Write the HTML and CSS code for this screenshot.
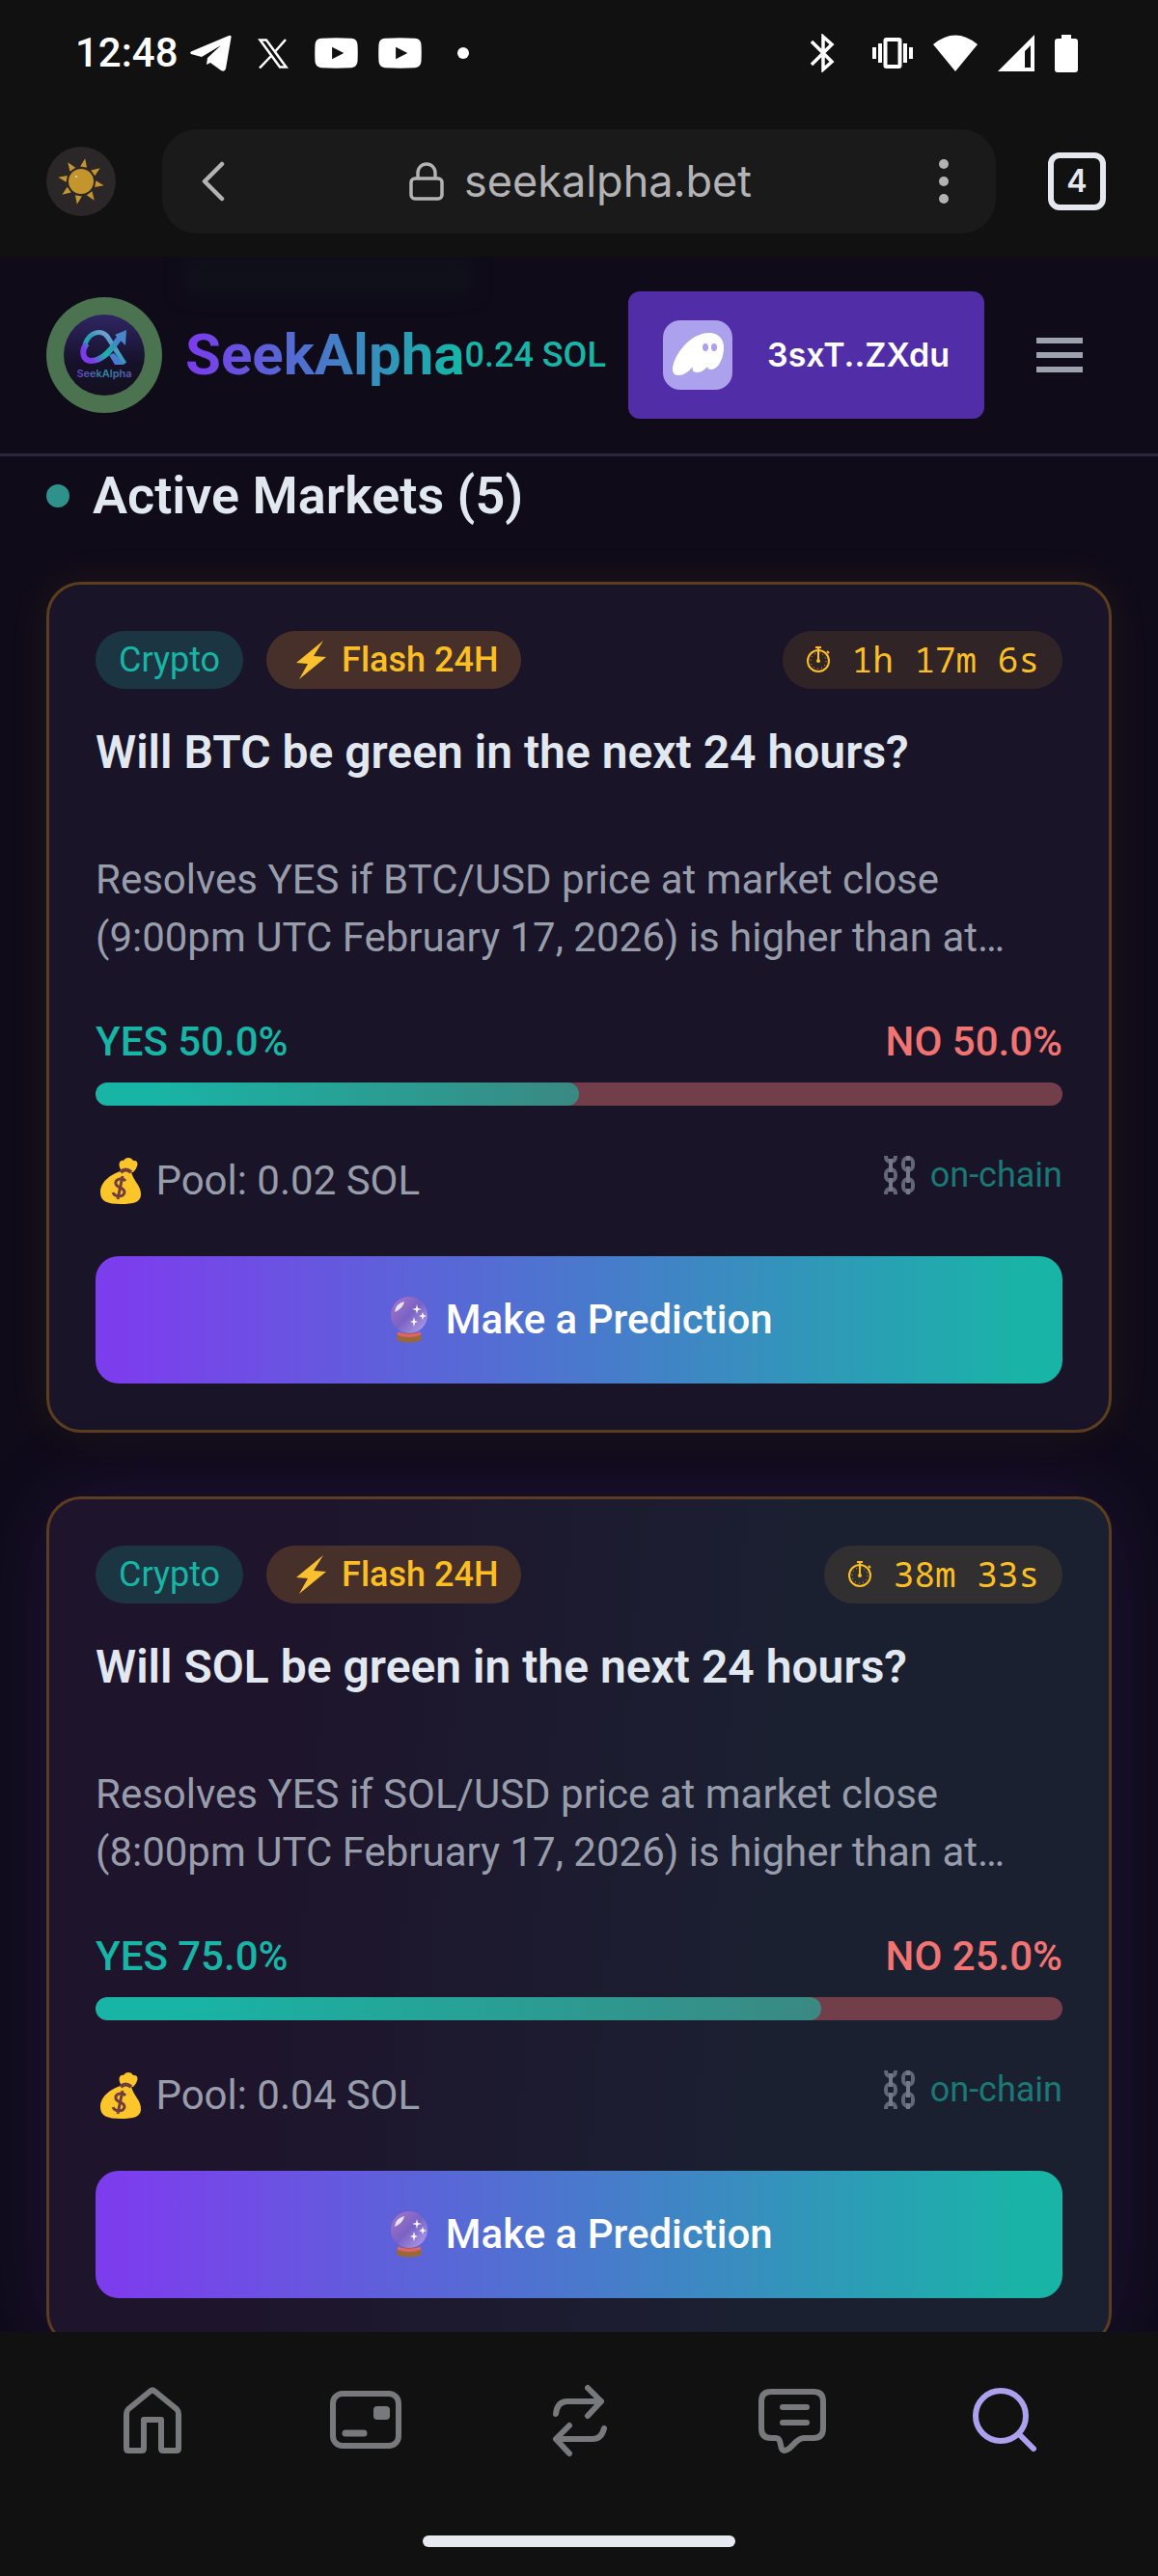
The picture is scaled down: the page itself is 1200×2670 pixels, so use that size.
FILE: index.html
```html
<!DOCTYPE html>
<html lang="en">
<head>
    <meta charset="UTF-8">
    <meta name="viewport" content="width=device-width, initial-scale=1.0">
    <title>SeekAlpha</title>
    <link rel="stylesheet" href="styles.css">
</head>
<body>
    <!-- Shared icons -->
    <svg class="sprite" aria-hidden="true">
        <defs>
            <linearGradient id="ballGlass" x1="0" y1="0" x2="1" y2="1">
                <stop offset="0" stop-color="#a878c8"/>
                <stop offset="0.5" stop-color="#7a62c4"/>
                <stop offset="1" stop-color="#b7a6ee"/>
            </linearGradient>
            <linearGradient id="alphaLoop" x1="0" y1="1" x2="1" y2="0">
                <stop offset="0" stop-color="#18b5a6"/>
                <stop offset="0.5" stop-color="#2a9db4"/>
                <stop offset="1" stop-color="#b9a3ee"/>
            </linearGradient>
            <linearGradient id="alphaArrow" x1="0" y1="0.5" x2="1" y2="0">
                <stop offset="0" stop-color="#7c3aed"/>
                <stop offset="0.4" stop-color="#18b5a6"/>
                <stop offset="1" stop-color="#4a7bd0"/>
            </linearGradient>
            <linearGradient id="logoBack" x1="0" y1="0" x2="0" y2="1">
                <stop offset="0" stop-color="#2e2663"/>
                <stop offset="0.6" stop-color="#161129"/>
                <stop offset="1" stop-color="#14101f"/>
            </linearGradient>
            <linearGradient id="logoText" x1="0" y1="0" x2="1" y2="0">
                <stop offset="0" stop-color="#6a3cc4"/>
                <stop offset="0.5" stop-color="#2a8ba4"/>
                <stop offset="1" stop-color="#5a55b0"/>
            </linearGradient>
        </defs>
        <symbol id="bolt" viewBox="0 0 45 42">
            <path d="M35 1 L7 24 L19 25 L10 41 L38 18 L25 17 Z" fill="#fbc02d"/>
        </symbol>
        <symbol id="stopwatch" viewBox="0 0 26 42">
            <g fill="none" stroke="#fbbf24">
                <circle cx="13" cy="22" r="11" stroke-width="2"/>
                <path d="M10 8h6M13 9v13M22 12l2 2" stroke-width="2"/>
                <circle cx="13" cy="22" r="8" stroke-width="1" stroke-dasharray="1 3.2"/>
            </g>
            <circle cx="13" cy="22" r="2" fill="#fbbf24"/>
        </symbol>
        <symbol id="moneybag" viewBox="0 0 52 50">
            <path d="M26 13 C23 8 25 3 29 4 C31 0 37 0 39 4 C45 3 45 10 39 16 L28 16 Z" fill="#fcc62b"/>
            <path d="M26 15 Q32 11 37 15 C38 24 48 30 47 40 C46 47 40 49 26 49 C12 49 5 46 5 37 C5 25 17 18 26 15 Z" fill="#fcc62b"/>
            <path d="M26 16 Q31 11 37 16" fill="none" stroke="#703d3f" stroke-width="4"/>
            <path d="M31 25 C28 21 20 23 21 28 C22 33 30 31 30 37 C29 42 20 42 18 37 M28 20 L23 44" fill="none" stroke="#703d3f" stroke-width="3"/>
        </symbol>
        <symbol id="chain" viewBox="0 0 45 42">
            <g fill="none" stroke="#626676" stroke-width="4">
                <path d="M8 1q0 6 5 6t5-6M8 41q0-6 5-6t5 6"/>
                <rect x="8" y="15" width="10" height="12" rx="5"/>
                <rect x="26" y="3" width="10" height="13" rx="5"/>
                <rect x="26" y="25" width="10" height="13" rx="5"/>
            </g>
            <path d="M13 4v14M13 24v14M31 1v5M31 12v17M31 35v6" stroke="#747887" stroke-width="4"/>
        </symbol>
        <symbol id="crystal" viewBox="0 0 52 50">
            <path d="M13 40 Q25 36 37 40 L38 46 Q25 51 12 46 Z" fill="#9a6835"/>
            <path d="M13 39 Q25 44 37 39" fill="none" stroke="#e0636c" stroke-width="3"/>
            <circle cx="25" cy="20" r="19" fill="url(#ballGlass)"/>
            <path d="M10 17 Q11 8 20 6 Q19 13 10 17 Z" fill="#e6e2f3"/>
            <path d="M33 9l1 4 4 1-4 1-1 4-1-4-4-1 4-1zM39 17l1 3 3 1-3 1-1 3-1-3-3-1 3-1zM30 22l1 4 3 1-3 1-1 4-1-4-3-1 3-1z" fill="#fff"/>
        </symbol>
        <symbol id="youtube" viewBox="0 0 46 32">
            <path fill="#fff" fill-rule="evenodd" d="M7 0.500Q23 -0.500 39 0.500Q45 1 45.500 7Q46 16 45.500 25Q45 31 39 31.500Q23 32.500 7 31.500Q1 31 0.500 25Q0 16 0.500 7Q1 1 7 0.500ZM18.500 9.500V22.500L31 16Z"/>
        </symbol>
    </svg>

    <!-- Status Bar -->
    <div class="status-bar">
        <div class="status-left">
            <span class="clock">12:48</span>
            <svg width="44" height="38" viewBox="0 0 44 38"><path fill="#fff" d="M41 1Q44 0 43.500 3L38 35Q37 39 33 37L22 29L18 31L19 24L33 11L13 23L2 20Q0 18 3 17Z"/></svg>
            <svg class="icon-x" width="32" height="31" viewBox="0 0 32 31"><path fill="none" stroke="#fff" stroke-width="2.500" d="M2.500 1.500H9L29.500 29.500H23ZM29 1L18 13.500M14 18L2 30.500"/></svg>
            <svg width="45" height="32"><use href="#youtube"/></svg>
            <svg width="45" height="32"><use href="#youtube"/></svg>
            <span class="status-dot"></span>
        </div>
        <div class="status-right">
            <svg width="26" height="40" viewBox="0 0 26 40"><path fill="none" stroke="#fff" stroke-width="3.500" d="M2 8L23 29L14 37V3L23 11L2 32"/></svg>
            <svg width="42" height="32" viewBox="0 0 42 32"><path fill="none" stroke="#fff" stroke-width="4" d="M2 10V22M8 6V26M34 6V26M40 10V22"/><rect x="13.500" y="2" width="15" height="28" rx="1" fill="none" stroke="#fff" stroke-width="4"/></svg>
            <svg width="46" height="38" viewBox="0 0 46 38"><path fill="#fff" d="M0 10Q23 -9 46 10L23 38Z"/></svg>
            <svg width="38" height="38" viewBox="0 0 38 38"><path fill="#fff" fill-rule="evenodd" d="M38 0V38H0ZM34 11L28 17V34H34Z"/></svg>
            <svg width="24" height="39" viewBox="0 0 24 39"><path fill="#fff" d="M7 0H17V4H21Q24 4 24 7V36Q24 39 21 39H3Q0 39 0 36V7Q0 4 3 4H7Z"/></svg>
        </div>
    </div>

    <!-- Browser Bar -->
    <div class="browser-bar">
        <button class="avatar" type="button" aria-label="Profile">
            <svg width="48" height="48" viewBox="-24 -24 48 48"><g fill="#c4952c" transform="rotate(10)"><circle r="13"/><path d="M-3.500-15h7L0-24zM-3.500 15h7L0 24zM15-3.500v7L24 0zM-15-3.500v7L-24 0z"/><path transform="rotate(45)" d="M-3.500-15h7L0-24zM-3.500 15h7L0 24zM15-3.500v7L24 0zM-15-3.500v7L-24 0z"/></g><circle cx="-5" cy="-5" r="1" fill="#eadfc0"/></svg>
        </button>
        <div class="address">
            <button type="button" aria-label="Back"><svg width="24" height="42" viewBox="0 0 24 42"><path fill="none" stroke="#b3b3b6" stroke-width="4.500" stroke-linecap="round" stroke-linejoin="round" d="M21 3L3 21L21 39"/></svg></button>
            <label class="url">
                <svg width="36" height="40" viewBox="0 0 36 40"><path fill="none" stroke="#b3b3b6" stroke-width="3.500" d="M9 17V11a9 9 0 0 1 18 0V17"/><rect x="2" y="17" width="32" height="21" rx="4" fill="none" stroke="#b3b3b6" stroke-width="3.500"/></svg>
                <input type="text" value="seekalpha.bet" aria-label="Address">
            </label>
            <button type="button" aria-label="Menu"><svg width="12" height="48" viewBox="0 0 12 48"><g fill="#b3b3b6"><circle cx="6" cy="6" r="5"/><circle cx="6" cy="24" r="5"/><circle cx="6" cy="42" r="5"/></g></svg></button>
        </div>
        <button class="tabs" type="button">4</button>
    </div>

    <!-- Page Header -->
    <header>
        <a class="brand" href="#">
            <svg class="logo" width="120" height="120" viewBox="0 0 120 120">
                <circle cx="60" cy="60" r="60" fill="#4b7350"/>
                <circle cx="60" cy="60" r="42" fill="url(#logoBack)"/>
                <path d="M40 49C45 35 58 33 64 42L81 69" fill="none" stroke="url(#alphaLoop)" stroke-width="5"/>
                <path d="M70 58L81 70H71L65 60Z" fill="#4a7bd0"/>
                <path d="M42 48C36 55 37 66 47 66C60 65 68 53 76 42" fill="none" stroke="url(#alphaArrow)" stroke-width="6"/>
                <path d="M71 39L83 34L82 50Z" fill="#4a86c8"/>
                <text x="60" y="83" text-anchor="middle" fill="url(#logoText)">SeekAlpha</text>
            </svg>
            <span class="brand-name">SeekAlpha</span>
        </a>
        <span class="balance">0.24 SOL</span>
        <button class="wallet" type="button">
            <svg width="72" height="72" viewBox="0 0 72 72"><rect width="72" height="72" rx="18" fill="#aba1ed"/><path fill="#fff" d="M48 13C58 13 63 20 63 28C63 40 57 51 50 51C47 51 46 49 46 48C42 53 38 54 35 54C31 54 30 51 31 48C26 54 21 57 16 57C11 57 10 54 10 50C11 36 28 13 48 13Z"/><ellipse cx="44" cy="28" rx="3" ry="4" fill="#aba1ed"/><ellipse cx="53" cy="28" rx="3" ry="4" fill="#aba1ed"/></svg>
            <span>3sxT..ZXdu</span>
        </button>
        <button class="menu" type="button" aria-label="Open menu"><span></span><span></span><span></span></button>
    </header>

    <!-- Markets -->
    <main>
        <h1><span class="live-dot"></span>Active Markets (5)</h1>

        <article class="card">
            <div class="tags">
                <span class="tag crypto">Crypto</span>
                <span class="tag flash"><svg width="45" height="42"><use href="#bolt"/></svg> Flash 24H</span>
                <span class="tag timer"><svg width="26" height="42"><use href="#stopwatch"/></svg> 1h 17m 6s</span>
            </div>
            <h2>Will BTC be green in the next 24 hours?</h2>
            <p class="rules">Resolves YES if BTC/USD price at market close (9:00pm UTC February 17, 2026) is higher than at…</p>
            <div class="odds"><span class="yes">YES 50.0%</span><span class="no">NO 50.0%</span></div>
            <div class="bar"><div class="bar-fill" style="width: 50%"></div></div>
            <div class="info">
                <span class="pool"><svg width="52" height="50"><use href="#moneybag"/></svg> Pool: 0.02 SOL</span>
                <span class="onchain"><svg width="45" height="42"><use href="#chain"/></svg> on-chain</span>
            </div>
            <button class="predict" type="button"><svg width="52" height="50"><use href="#crystal"/></svg> Make a Prediction</button>
        </article>

        <article class="card active">
            <div class="tags">
                <span class="tag crypto">Crypto</span>
                <span class="tag flash"><svg width="45" height="42"><use href="#bolt"/></svg> Flash 24H</span>
                <span class="tag timer"><svg width="26" height="42"><use href="#stopwatch"/></svg> 38m 33s</span>
            </div>
            <h2>Will SOL be green in the next 24 hours?</h2>
            <p class="rules">Resolves YES if SOL/USD price at market close (8:00pm UTC February 17, 2026) is higher than at…</p>
            <div class="odds"><span class="yes">YES 75.0%</span><span class="no">NO 25.0%</span></div>
            <div class="bar"><div class="bar-fill" style="width: 75%"></div></div>
            <div class="info">
                <span class="pool"><svg width="52" height="50"><use href="#moneybag"/></svg> Pool: 0.04 SOL</span>
                <span class="onchain"><svg width="45" height="42"><use href="#chain"/></svg> on-chain</span>
            </div>
            <button class="predict" type="button"><svg width="52" height="50"><use href="#crystal"/></svg> Make a Prediction</button>
        </article>
    </main>

    <!-- Bottom Navigation -->
    <nav class="bottom-nav">
        <ul>
            <li><a href="#" aria-label="Home"><svg width="76" height="76" viewBox="0 0 76 76"><path d="M11 67V31Q11 28 13 26L35 8Q38 5 41 8L63 26Q65 28 65 31V67Q65 69 63 69H49Q47 69 47 67V37H29V67Q29 69 27 69H13Q11 69 11 67Z"/></svg></a></li>
            <li><a href="#" aria-label="Wallet"><svg width="76" height="76" viewBox="0 0 76 76"><rect x="4" y="10" width="68" height="54" rx="10"/><path d="M17 51H36" stroke-width="7"/><rect x="49" y="26" width="11" height="8" rx="1" fill="currentColor"/></svg></a></li>
            <li><a href="#" aria-label="Swap"><svg width="76" height="76" viewBox="0 0 76 76"><path d="M14 31C15 22 19 18 26 18H61M47 4L61 18L47 33M64 46C62 54 58 57 52 57H15M28 43L14 57L28 72"/></svg></a></li>
            <li><a href="#" aria-label="Chat"><svg width="76" height="76" viewBox="0 0 76 76"><path d="M16 8H60Q70 8 70 18V46Q70 56 60 56H50C41 56 37 69 30 69C24 69 28 56 21 56H16Q6 56 6 46V18Q6 8 16 8ZM28 24H53M28 40H53"/></svg></a></li>
            <li class="current"><a href="#" aria-label="Search"><svg width="76" height="76" viewBox="0 0 76 76"><circle cx="33" cy="33" r="26"/><path d="M52 52L67 67"/></svg></a></li>
        </ul>
        <div class="home-indicator"></div>
    </nav>
</body>
</html>
```

FILE: styles.css
```css
/* General Styles */
* {
    box-sizing: border-box;
}

body {
    font-family: Roboto, "Noto Sans", sans-serif;
    font-size: 42px;
    line-height: 60px;
    margin: 0;
    height: 100vh;
    display: flex;
    flex-direction: column;
    overflow: hidden;
    background-color: #0f0b19;
    color: #e2e8f0;
}

button {
    font-family: inherit;
    border: none;
    padding: 0;
    background: none;
    color: inherit;
    cursor: pointer;
}

svg {
    display: block;
    flex-shrink: 0;
}

a {
    color: inherit;
    text-decoration: none;
}

.sprite {
    position: absolute;
    width: 0;
    height: 0;
}

/* Status Bar */
.status-bar {
    display: flex;
    justify-content: space-between;
    align-items: center;
    height: 110px;
    padding: 0 83px 0 78px;
    background-color: #111;
    color: #fff;
}

.status-left,
.status-right {
    display: flex;
    align-items: center;
    gap: 21px;
}

.clock {
    font-weight: 500;
    margin-right: -10px;
}

.status-left .icon-x {
    margin: 0 6px;
}

.status-dot {
    width: 12px;
    height: 12px;
    margin-left: 16px;
    border-radius: 50%;
    background-color: #fff;
}

.status-right svg:first-child {
    margin-right: 18px;
}

/* Browser Bar */
.browser-bar {
    display: flex;
    align-items: center;
    gap: 48px;
    padding: 24px 54px 24px 48px;
    background-color: #111;
}

.avatar {
    display: flex;
    align-items: center;
    justify-content: center;
    width: 72px;
    height: 72px;
    border-radius: 50%;
    background-color: #2b2627;
}

.address {
    flex: 1;
    display: flex;
    align-items: center;
    justify-content: space-between;
    height: 108px;
    padding: 0 48px 0 41px;
    border-radius: 36px;
    background-color: #1a1a1a;
    margin-right: 6px;
}

.url {
    display: flex;
    align-items: center;
    gap: 21px;
}

.url input {
    width: 300px;
    padding: 0;
    border: none;
    outline: none;
    background: none;
    color: #b3b3b6;
    font: 45px/60px Inter, sans-serif;
}

.tabs {
    width: 60px;
    height: 60px;
    border: 6px solid #e6e8f0;
    border-radius: 12px;
    color: #e6e8f0;
    font: 600 32px/48px Inter, sans-serif;
}

/* Header Styles */
header {
    position: relative;
    display: flex;
    align-items: center;
    padding: 36px 48px;
    border-bottom: 3px solid #2c2540;
    background-color: #0f0b19;
}

header::before {
    content: "";
    position: absolute;
    top: 0;
    left: 190px;
    width: 300px;
    height: 40px;
    background-color: #10101b;
    filter: blur(9px);
    clip-path: inset(0 -30px -30px -30px);
}

.brand {
    position: relative;
    display: flex;
    align-items: center;
    gap: 24px;
}

.logo text {
    font: 600 11px Inter, sans-serif;
}

.brand-name {
    font-size: 60px;
    font-weight: 700;
    line-height: 84px;
    background: linear-gradient(90deg, #7c3aed, #14b8a6);
    -webkit-background-clip: text;
    background-clip: text;
    color: transparent;
}

.balance {
    margin-right: auto;
    color: #18b5a6;
    font-size: 36px;
    font-weight: 500;
}

.wallet {
    display: flex;
    align-items: center;
    gap: 36px;
    height: 132px;
    padding: 0 36px;
    border-radius: 12px;
    background-color: #512da8;
    color: #fff;
    font: 600 34px/48px Inter, sans-serif;
}

.menu {
    display: flex;
    flex-direction: column;
    gap: 9px;
    margin-left: 24px;
    padding: 0 30px;
}

.menu span {
    width: 48px;
    height: 6px;
    background-color: #9ca3af;
}

/* Markets */
main {
    flex: 1;
    min-height: 0;
    overflow: hidden;
    padding: 0 48px;
}

h1 {
    display: flex;
    align-items: center;
    gap: 24px;
    margin: 0 0 48px;
    font-size: 54px;
    font-weight: 600;
    line-height: 82px;
}

.live-dot {
    width: 24px;
    height: 24px;
    border-radius: 50%;
    background-color: #2f918c;
}

.card {
    padding: 48px;
    margin-bottom: 66px;
    border: 3px solid #5c3d1e;
    border-radius: 36px;
    background-color: #191427;
    box-shadow: 0 0 45px rgba(251, 191, 36, 0.07);
}

.card.active {
    background-image: linear-gradient(95deg, #1e142c 20%, #1b2031 68%);
    box-shadow: 0 0 90px rgba(124, 58, 237, 0.15);
}

.tags {
    display: flex;
    gap: 24px;
    margin-bottom: 36px;
}

.tag {
    display: flex;
    align-items: center;
    padding: 6px 24px;
    border-radius: 30px;
    font-size: 36px;
    line-height: 48px;
    white-space: pre;
}

.crypto {
    background-color: #1b3642;
    color: #18b5a6;
}

.flash {
    background-color: #473029;
    color: #fbbf24;
    font-weight: 500;
}

.timer {
    margin-left: auto;
    background-color: rgba(251, 191, 36, 0.1);
    color: #fbbf24;
    font-family: "Droid Sans Mono", "Noto Sans Mono", "DejaVu Sans Mono", monospace;
}

h2 {
    min-height: 120px;
    margin: 0 0 12px;
    font-size: 48px;
    font-weight: 600;
    line-height: 60px;
}

.rules {
    margin: 0 0 48px;
    color: #989dab;
}

.odds {
    display: flex;
    justify-content: space-between;
    margin-bottom: 12px;
    font-weight: 500;
}

.yes {
    color: #18b5a6;
}

.no {
    color: #f17472;
}

.bar {
    height: 24px;
    margin-bottom: 48px;
    border-radius: 12px;
    overflow: hidden;
    background-color: #723e49;
}

.bar-fill {
    height: 100%;
    border-radius: 12px;
    background: linear-gradient(90deg, #18b5a6 10%, #3a8983);
}

.info {
    display: flex;
    justify-content: space-between;
    align-items: flex-start;
    margin-bottom: 48px;
    color: #989dab;
}

.pool,
.onchain {
    display: flex;
    align-items: center;
    white-space: pre;
}

.onchain {
    color: #1a7975;
    font-size: 36px;
    line-height: 48px;
}

.predict {
    display: flex;
    align-items: center;
    justify-content: center;
    width: 100%;
    height: 132px;
    border-radius: 24px;
    background: linear-gradient(90deg, #7c3eed 3%, #4a78cd 50%, #18b5a6 97%);
    color: #fff;
    font-size: 42px;
    font-weight: 500;
    line-height: 60px;
    white-space: pre;
}

/* Bottom Navigation */
.bottom-nav {
    padding: 54px 48px 30px;
    background-color: #111;
    position: relative;
}

.bottom-nav ul {
    display: flex;
    margin: 0 0 81px;
    padding: 0;
    list-style: none;
}

.bottom-nav li {
    flex: 1;
    display: flex;
    justify-content: center;
    color: #78797d;
}

.bottom-nav li.current {
    color: #aba1ed;
}

.bottom-nav svg {
    fill: none;
    stroke: currentColor;
    stroke-width: 6;
    stroke-linecap: round;
    stroke-linejoin: round;
}

.home-indicator {
    width: 324px;
    height: 12px;
    margin: 0 auto;
    border-radius: 6px;
    background-color: #e6e9f0;
}
```
